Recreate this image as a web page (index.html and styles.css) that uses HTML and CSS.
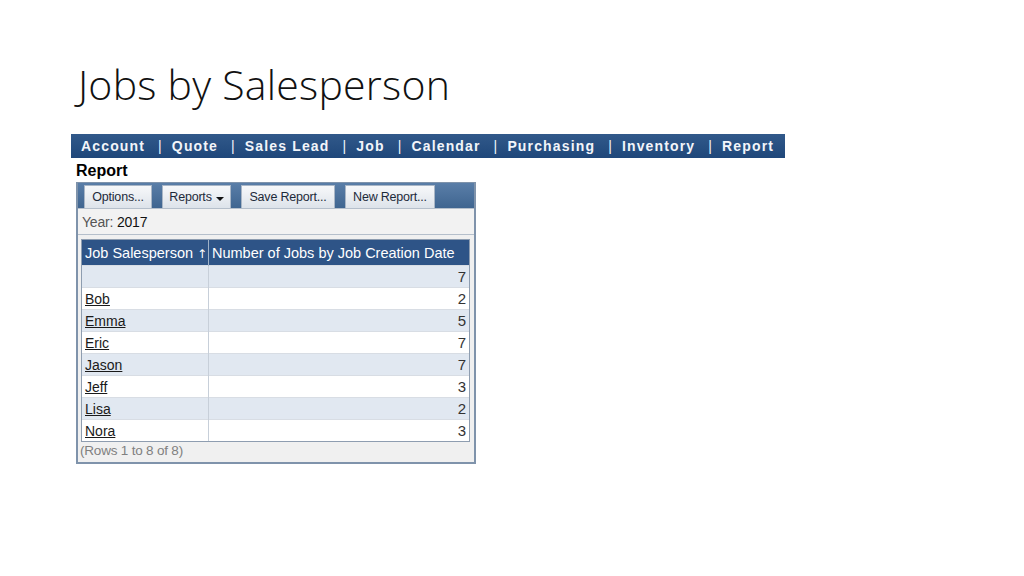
FILE: index.html
```html
<!DOCTYPE html>
<html>
<head>
<meta charset="utf-8">
<link rel="stylesheet" href="styles.css">
</head>
<body>
<div class="slide">
  <h1 class="title">Jobs by Salesperson</h1>
  <div class="nav">
    <span class="nav-item">Account</span><span class="sep">|</span>
    <span class="nav-item">Quote</span><span class="sep">|</span>
    <span class="nav-item">Sales Lead</span><span class="sep">|</span>
    <span class="nav-item">Job</span><span class="sep">|</span>
    <span class="nav-item">Calendar</span><span class="sep">|</span>
    <span class="nav-item">Purchasing</span><span class="sep">|</span>
    <span class="nav-item">Inventory</span><span class="sep">|</span>
    <span class="nav-item">Report</span>
  </div>
  <div class="report-head">Report</div>
  <div class="panel">
    <div class="toolbar">
      <span class="btn btn-options">Options...</span>
      <span class="btn btn-reports">Reports <span class="caret"></span></span>
      <span class="btn btn-save">Save Report...</span>
      <span class="btn btn-new">New Report...</span>
    </div>
    <div class="year">Year: <span class="year-val">2017</span></div>
    <div class="table-wrap">
      <table class="grid">
        <thead>
          <tr><th class="c1">Job Salesperson <span class="arrow">↑</span></th><th class="c2">Number of Jobs by Job Creation Date</th></tr>
        </thead>
        <tbody>
          <tr class="alt"><td></td><td class="num">7</td></tr>
          <tr><td><a>Bob</a></td><td class="num">2</td></tr>
          <tr class="alt"><td><a>Emma</a></td><td class="num">5</td></tr>
          <tr><td><a>Eric</a></td><td class="num">7</td></tr>
          <tr class="alt"><td><a>Jason</a></td><td class="num">7</td></tr>
          <tr><td><a>Jeff</a></td><td class="num">3</td></tr>
          <tr class="alt"><td><a>Lisa</a></td><td class="num">2</td></tr>
          <tr><td><a>Nora</a></td><td class="num">3</td></tr>
        </tbody>
      </table>
    </div>
    <div class="footer">(Rows 1 to 8 of 8)</div>
  </div>
</div>
</body>
</html>
```
FILE: styles.css
```css
html, body {
  margin: 0;
  padding: 0;
  background: #ffffff;
}
.slide {
  width: 1024px;
  height: 576px;
  overflow: hidden;
}
.title {
  margin: 0;
  padding: 57px 0 0 78px;
  font-family: "Open Sans", sans-serif;
  font-weight: 300;
  font-size: 41px;
  line-height: 54px;
  color: #111;
  letter-spacing: 0.25px;
}
.nav {
  margin: 23px 0 0 71px;
  width: 714px;
  height: 24px;
  box-sizing: border-box;
  background: linear-gradient(#31598a, #1f477a);
  display: flex;
  align-items: center;
  padding-left: 10px;
  font-family: "Liberation Sans", Arial, sans-serif;
  font-weight: bold;
  font-size: 14px;
  letter-spacing: 1.15px;
  color: #f2f5fa;
  white-space: nowrap;
}
.sep {
  margin: 0 9px 0 13px;
  font-weight: normal;
}
.report-head {
  margin: 3px 0 0 76px;
  font-family: "Liberation Sans", Arial, sans-serif;
  font-weight: bold;
  font-size: 16px;
  line-height: 20px;
  color: #000;
}
.panel {
  margin: 1px 0 0 76px;
  width: 400px;
  height: 282px;
  box-sizing: border-box;
  border: 2px solid #7f93ab;
  border-top: 1px solid #7f93ab;
  background: #f0f0f0;
  font-family: "Liberation Sans", Arial, sans-serif;
}
.toolbar {
  height: 25px;
  background: linear-gradient(#5a7ea8, #3f6590);
  display: flex;
  align-items: flex-start;
  padding: 2px 0 0 6px;
  box-sizing: border-box;
}
.btn {
  height: 23px;
  box-sizing: border-box;
  background: linear-gradient(#f7f8fa, #dde3ea);
  border: 1px solid #a9b6c6;
  border-bottom: none;
  font-size: 12.5px;
  color: #1d2a3a;
  display: flex;
  align-items: center;
  justify-content: center;
  margin-right: 10px;
  letter-spacing: -0.2px;
}
.btn-options { width: 68px; }
.btn-reports { width: 69px; }
.btn-save { width: 94px; }
.btn-new { width: 90px; }
.caret {
  display: inline-block;
  width: 0;
  height: 0;
  border-left: 4px solid transparent;
  border-right: 4px solid transparent;
  border-top: 4px solid #111;
  margin-left: 4px;
  margin-top: 3px;
}
.year {
  height: 27px;
  border-top: 1px solid #b5bfcb;
  border-bottom: 1px solid #b5bfcb;
  box-sizing: border-box;
  background: #f2f2f2;
  font-size: 14px;
  color: #555;
  padding: 5px 0 0 4px;
  letter-spacing: -0.2px;
}
.year-val { color: #111; }
.table-wrap {
  margin: 4px 4px 0 3px;
  border: 1px solid #8e9db0;
  background: #fff;
}
.grid {
  width: 100%;
  border-collapse: collapse;
  table-layout: fixed;
  font-size: 14px;
}
.grid th {
  background: #2e5487;
  color: #fff;
  font-weight: normal;
  font-size: 14.5px;
  text-align: left;
  height: 24px;
  padding: 0 3px;
  border-right: 1px solid #9fb2c8;
  border-top: 1px solid #2e5487;
  white-space: nowrap;
  overflow: hidden;
}
.arrow {
  font-family: "DejaVu Sans", sans-serif;
  font-size: 12px;
  color: #fff;
}
.grid th:last-child { border-right: none; }
.grid th.c1 { width: 120px; }
.grid td {
  height: 21px;
  padding: 0 3px;
  border-right: 1px solid #c7cfd9;
  border-top: 1px solid #d8dde4;
  color: #222;
}
.grid td:last-child { border-right: none; }
.grid tr.alt td { background: #e1e8f1; }
.grid td.num { text-align: right; color: #333; font-size: 15px; }
.grid a {
  color: #1a1a1a;
  text-decoration: underline;
}
.footer {
  font-size: 13.5px;
  color: #808080;
  padding: 1px 0 0 2px;
  letter-spacing: -0.2px;
}
```
